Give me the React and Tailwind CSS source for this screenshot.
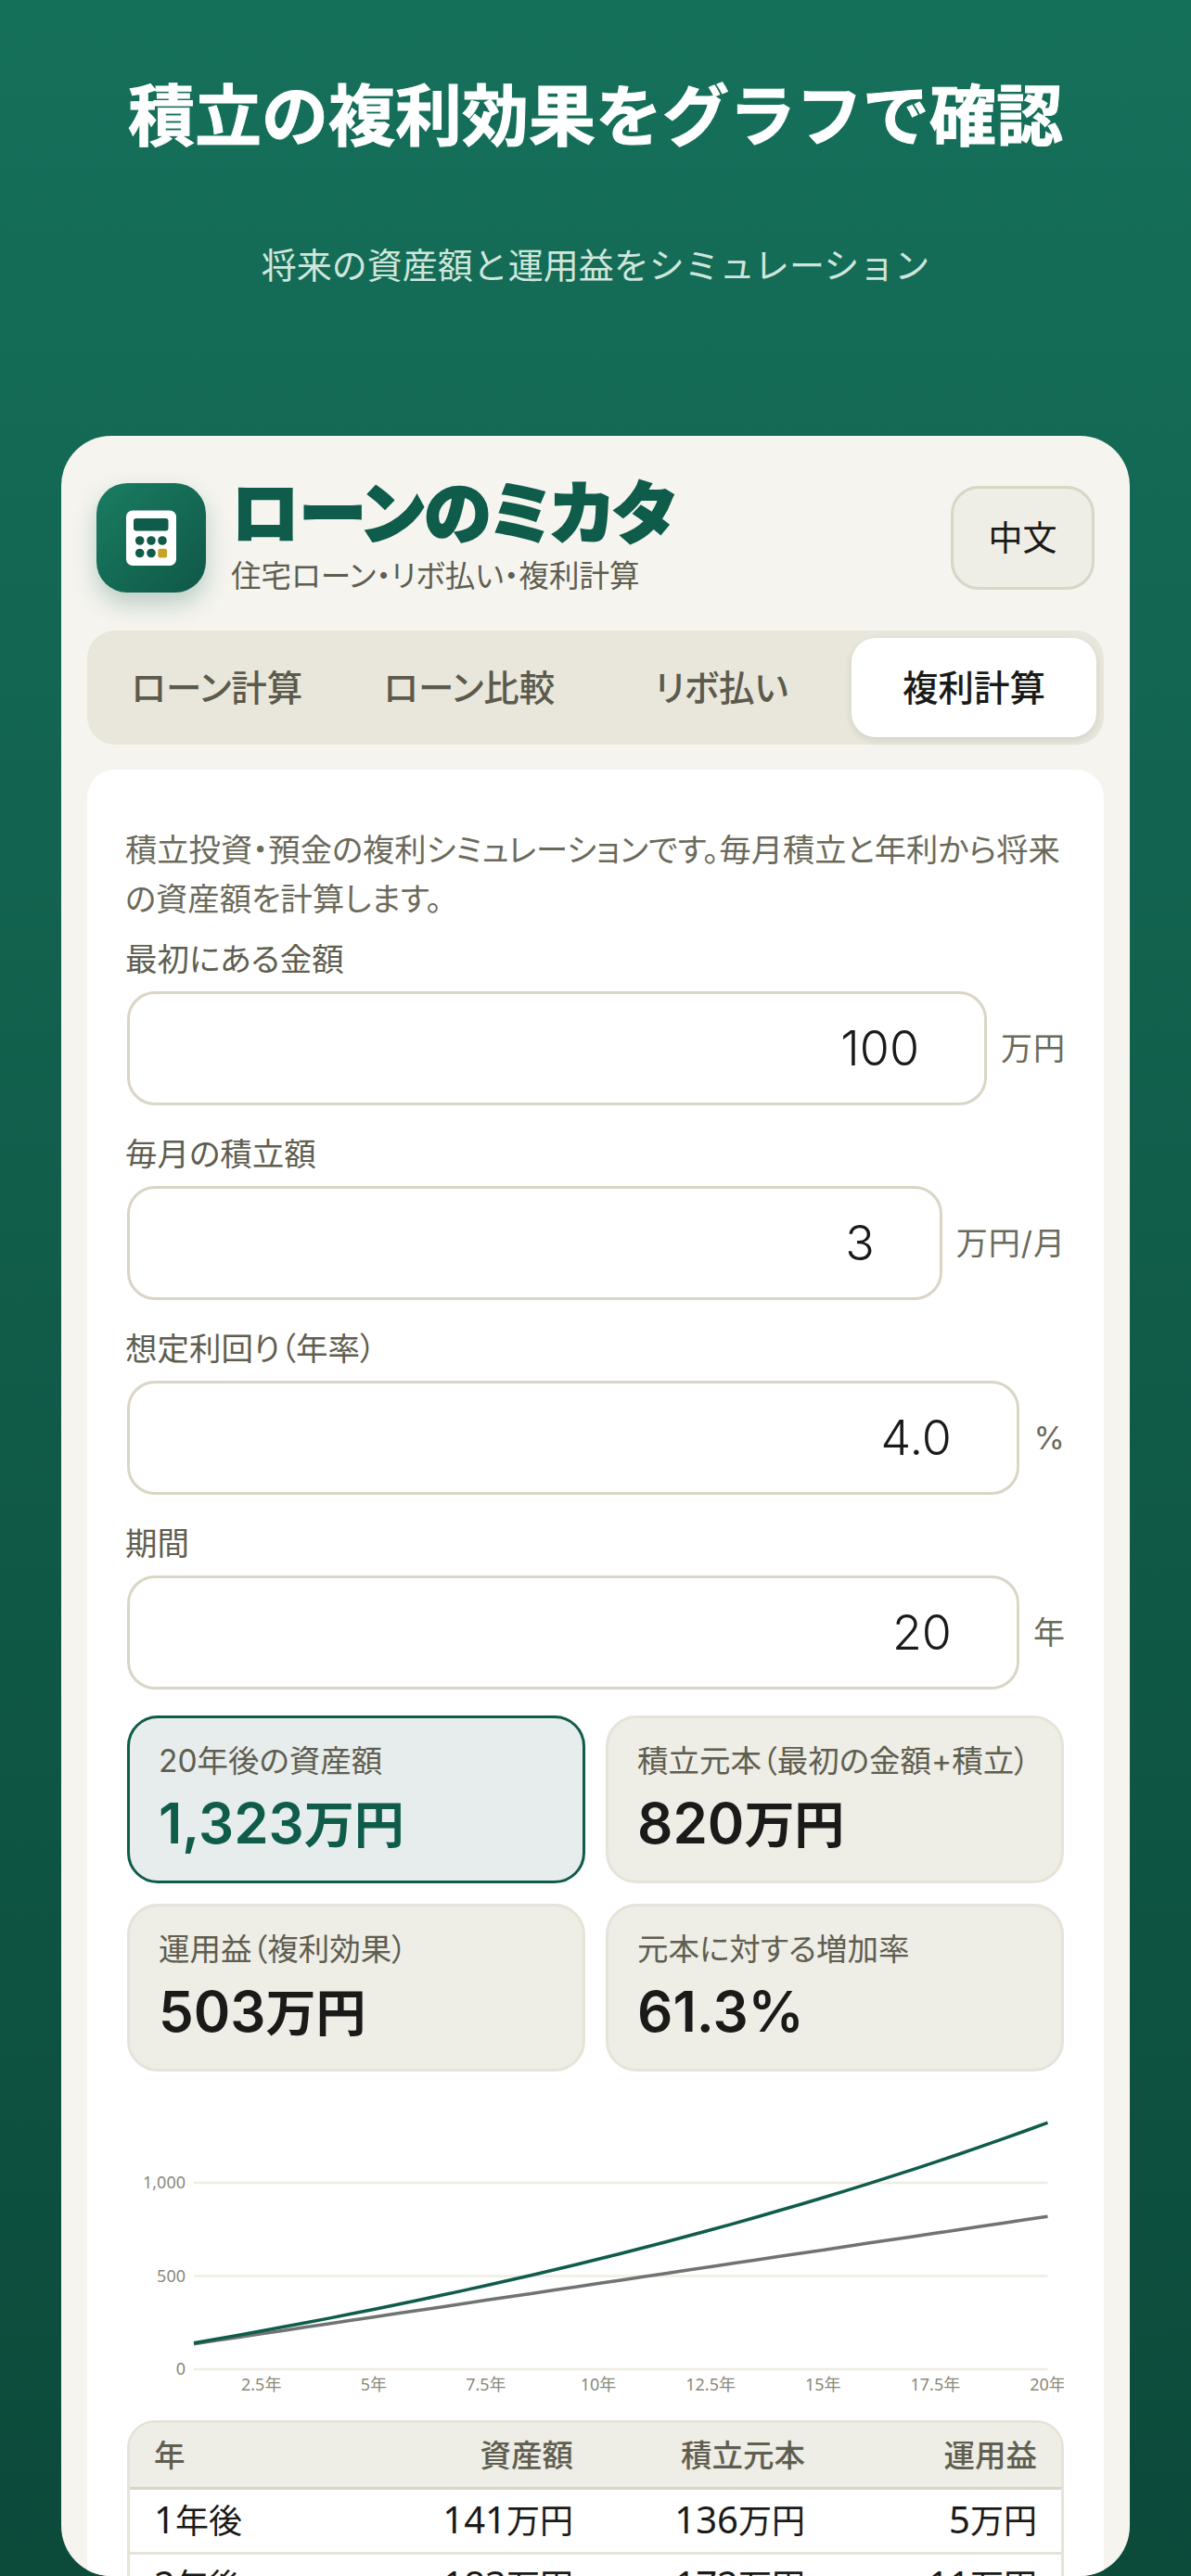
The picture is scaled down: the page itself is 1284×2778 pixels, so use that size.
import { useMemo } from "react";

const TABS = ["ローン計算", "ローン比較", "リボ払い", "複利計算"];

const FIELDS = [
  { label: "最初にある金額", value: "100", unit: "万円" },
  { label: "毎月の積立額", value: "3", unit: "万円/月" },
  { label: "想定利回り（年率）", value: "4.0", unit: "%" },
  { label: "期間", value: "20", unit: "年" },
];

const STATS = [
  { label: "20年後の資産額", value: "1,323万円", active: true },
  { label: "積立元本（最初の金額+積立）", value: "820万円" },
  { label: "運用益（複利効果）", value: "503万円" },
  { label: "元本に対する増加率", value: "61.3%" },
];

const ROWS = [
  ["1年後", "141万円", "136万円", "5万円"],
  ["2年後", "183万円", "172万円", "11万円"],
  ["3年後", "227万円", "208万円", "19万円"],
];

// 月複利での資産額
function assetAt(year) {
  const r = 0.04 / 12;
  const n = year * 12;
  return 100 * Math.pow(1 + r, n) + (3 * (Math.pow(1 + r, n) - 1)) / r;
}

// 数字だけ少し大きく見せる
function Num({ text, className }) {
  return text.split(/([\d.,%]+)/).map((part, i) =>
    /\d/.test(part) ? (
      <span key={i} className={className}>
        {part}
      </span>
    ) : (
      part
    )
  );
}

function LogoIcon() {
  return (
    <svg width="118" height="118" viewBox="0 0 118 118">
      <rect x="32" y="29.5" width="54" height="59.5" rx="7" fill="#fff" />
      <rect x="40" y="38" width="37.5" height="13.5" rx="3" fill="#0f5c4b" />
      <circle cx="46.7" cy="62" r="4.8" fill="#0f5c4b" />
      <circle cx="59" cy="62" r="4.8" fill="#0f5c4b" />
      <circle cx="71" cy="62" r="4.8" fill="#0f5c4b" />
      <circle cx="46.7" cy="75.5" r="4.8" fill="#0f5c4b" />
      <circle cx="59" cy="75.5" r="4.8" fill="#0f5c4b" />
      <rect x="66.3" y="70.7" width="9.8" height="9.8" rx="2.5" fill="#c9a227" />
    </svg>
  );
}

function Chart() {
  const xAt = (y) => 72 + ((y - 1) * 920.5) / 19;
  const yAt = (v) => 300 - v * 0.201;
  const { assets, principal } = useMemo(() => {
    const a = [];
    const p = [];
    for (let i = 12; i <= 240; i += 6) {
      const year = i / 12;
      a.push(`${xAt(year).toFixed(1)},${yAt(assetAt(year)).toFixed(1)}`);
      p.push(`${xAt(year).toFixed(1)},${yAt(100 + 3 * i).toFixed(1)}`);
    }
    return { assets: a.join(" "), principal: p.join(" ") };
  }, []);

  return (
    <svg width="1010" height="350" viewBox="0 0 1010 350" className="mt-[21px] block">
      {[0, 500, 1000].map((v) => (
        <g key={v}>
          <line x1="72" x2="992.5" y1={yAt(v)} y2={yAt(v)} stroke="#efece3" strokeWidth="2.5" />
          <text x="63" y={yAt(v) + 6} textAnchor="end" fontSize="18" fill="#8a8879">
            {v === 1000 ? "1,000" : v}
          </text>
        </g>
      ))}
      {[2.5, 5, 7.5, 10, 12.5, 15, 17.5, 20].map((y) => (
        <text key={y} x={xAt(y)} y="323" textAnchor="middle" fontSize="18" fill="#8a8879">
          {y}年
        </text>
      ))}
      <polyline points={principal} fill="none" stroke="#6f7472" strokeWidth="3.5" />
      <polyline points={assets} fill="none" stroke="#0f5c4b" strokeWidth="3.5" />
    </svg>
  );
}

export default function App() {
  return (
    <div className="h-[2778px] overflow-hidden bg-gradient-to-b from-[#15705a] to-[#0c4a3a] font-['Noto_Sans','Noto_Sans_CJK_JP',sans-serif] [font-feature-settings:'palt']">
      {/* Hero */}
      <div className="h-[470px] pt-[75px] text-center">
        <h1 className="text-[72px] leading-[96px] font-bold text-white [-webkit-text-stroke:1px_#fff] [font-feature-settings:normal]">
          積立の複利効果をグラフで確認
        </h1>
        <p className="mt-[89px] text-[38px] leading-[50px] text-[#cfe6dc] [font-feature-settings:normal]">
          将来の資産額と運用益をシミュレーション
        </p>
      </div>

      {/* Card */}
      <div className="mx-[66px] h-[2308px] overflow-hidden rounded-[54px] bg-[#f5f4ef] px-[28px] pt-[51px]">
        <div className="flex h-[118px] items-center justify-between px-[10px]">
          <div className="flex items-center gap-[27px]">
            <div className="h-[118px] w-[118px] rounded-[33px] bg-gradient-to-br from-[#1a7d62] to-[#0f5847] shadow-[0_12px_24px_rgba(15,92,75,0.25)]">
              <LogoIcon />
            </div>
            <div className="mt-[-3px]">
              <div className="text-[73px] leading-[76px] font-black text-[#0f5c4b] [-webkit-text-stroke:2px_#0f5c4b]">
                ローンのミカタ
              </div>
              <div className="mt-[8px] text-[32.6px] leading-[46px] text-[#5f5e50]">住宅ローン・リボ払い・複利計算</div>
            </div>
          </div>
          <button className="h-[112px] w-[155px] rounded-[30px] border-[3px] border-[#d9d6c6] bg-[#eeede6] text-[37px] text-[#1a1a18]">
            中文
          </button>
        </div>

        <div className="mt-[41px] grid h-[123px] grid-cols-4 gap-[8px] rounded-[30px] bg-[#e9e7dc] p-[8px]">
          {TABS.map((tab, i) => (
            <button
              key={tab}
              className={`rounded-[26px] text-[38.5px] font-medium ${
                i === 3
                  ? "bg-white text-[#1a1a18] shadow-[0_3px_9px_rgba(0,0,0,0.1)]"
                  : "text-[#5c5a4c]"
              }`}
            >
              {tab}
            </button>
          ))}
        </div>

        {/* Panel */}
        <div className="mt-[27px] h-[1950px] rounded-t-[30px] bg-white px-[43px] pt-[59px]">
          <p className="ml-[-2px] text-[34.3px] leading-[53px] whitespace-nowrap text-[#6b6a5a]">
            積立投資・預金の複利シミュレーションです。毎月積立と年利から将来
            <br />
            の資産額を計算します。
          </p>

          <div className="mt-[15px] flex flex-col gap-[28px]">
            {FIELDS.map((f) => (
              <div key={f.label}>
                <label className="mb-[11px] ml-[-2px] block text-[34.5px] leading-[48px] text-[#5f5e50]">
                  {f.label}
                </label>
                <div className="flex items-center gap-[15px]">
                  <input
                    defaultValue={f.value}
                    className="h-[123px] min-w-0 flex-1 rounded-[30px] border-[3px] border-[#d9d6c6] bg-white pr-[70px] text-right font-['Inter',sans-serif] text-[52px] font-[350] text-[#1a1a18] outline-none"
                  />
                  <span className="mr-[-2px] min-w-[35px] shrink-0 text-right font-['Inter','Noto_Sans_CJK_JP',sans-serif] text-[34px] tracking-[1px] text-[#6b6a5a]">
                    {f.unit}
                  </span>
                </div>
              </div>
            ))}
          </div>

          <div className="mt-[28px] grid grid-cols-2 gap-[22px]">
            {STATS.map((s) => (
              <div
                key={s.label}
                className={`h-[181px] rounded-[33px] border-[3px] px-[31px] pt-[22px] ${
                  s.active ? "border-[#0f5c4b] bg-[#e7eded]" : "border-[#e6e4d8] bg-[#eeede6]"
                }`}
              >
                <div className="font-['Inter','Noto_Sans_CJK_JP',sans-serif] text-[33.5px] leading-[48px] whitespace-nowrap text-[#5f5e50]">
                  {s.label}
                </div>
                <div
                  className={`mt-[7px] text-[54px] leading-[72px] font-semibold ${
                    s.active ? "text-[#0f5c4b]" : "text-[#1a1a18]"
                  }`}
                >
                  <Num text={s.value} className="font-['Inter','Noto_Sans_CJK_JP',sans-serif] text-[60px]" />
                </div>
              </div>
            ))}
          </div>

          <Chart />

          <div className="mt-[5px] overflow-hidden rounded-[30px] border-[3px] border-[#e6e4d8]">
            <table className="w-full table-fixed border-collapse">
              <colgroup>
                <col className="w-[255px]" />
                <col className="w-[249px]" />
                <col className="w-[250px]" />
                <col className="w-[250px]" />
              </colgroup>
              <thead>
                <tr className="h-[70px] border-b-[3px] border-[#d9d6c6] bg-[#eeede6] text-[33.5px] leading-[50px] text-[#5f5e50]">
                  <th className="px-[26px] text-left font-medium">年</th>
                  <th className="px-[26px] text-right font-medium">資産額</th>
                  <th className="px-[26px] text-right font-medium">積立元本</th>
                  <th className="px-[26px] text-right font-medium">運用益</th>
                </tr>
              </thead>
              <tbody>
                {ROWS.map((row) => (
                  <tr key={row[0]} className="h-[70px] border-b-[3px] border-[#e6e4d8] text-[36px] leading-[50px] text-[#1a1a18]">
                    {row.map((cell, i) => (
                      <td key={i} className={`px-[26px] ${i === 0 ? "text-left" : "text-right"}`}>
                        <Num text={cell} className="text-[40px]" />
                      </td>
                    ))}
                  </tr>
                ))}
              </tbody>
            </table>
          </div>
        </div>
      </div>
    </div>
  );
}
